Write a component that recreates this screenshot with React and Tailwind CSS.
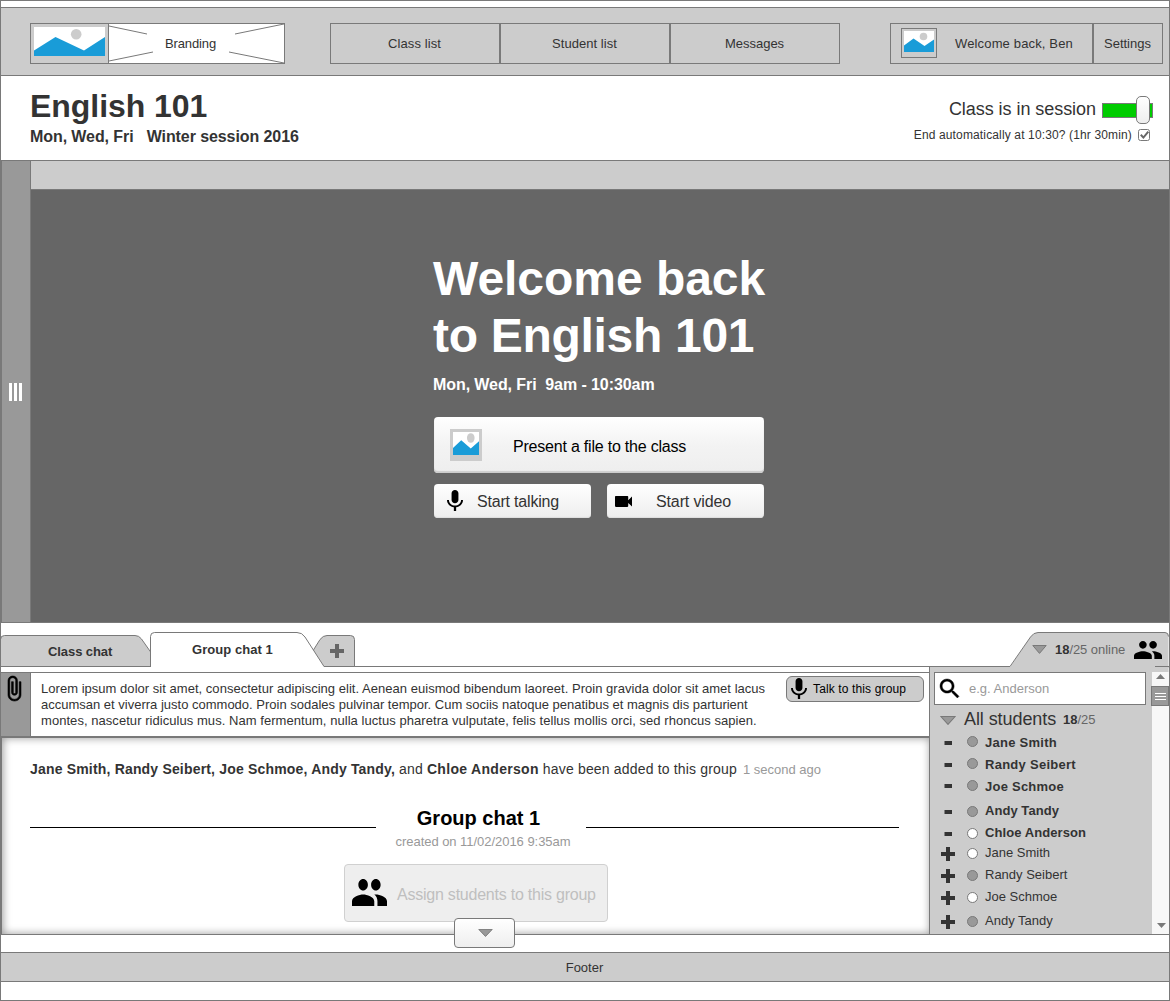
import React from "react";

function Picture({ className, sun = [42.5, 9.5, 5.3], size = [71, 29], hill }) {
  return (
    <svg className={className} viewBox={`0 0 ${size[0]} ${size[1]}`} preserveAspectRatio="none">
      <rect width={size[0]} height={size[1]} fill="#fff" />
      <circle cx={sun[0]} cy={sun[1]} r={sun[2]} fill="#ccc" />
      <path d={hill} fill="#199cd8" />
    </svg>
  );
}

const SMALL_HILL = "M0 14.5 9.5 7.5 20.5 15 30 8.5V21H0z";

function Icon({ className, viewBox, d }) {
  return (
    <svg className={className} viewBox={viewBox} preserveAspectRatio="none" fill="#000">
      <path d={d} />
    </svg>
  );
}

function People({ className }) {
  return (
    <Icon
      className={className}
      viewBox="1 5 22 14"
      d="M16 11c1.66 0 2.99-1.34 2.99-3S17.66 5 16 5c-1.66 0-3 1.34-3 3s1.34 3 3 3zm-8 0c1.66 0 2.99-1.34 2.99-3S9.66 5 8 5C6.34 5 5 6.34 5 8s1.34 3 3 3zm0 2c-2.33 0-7 1.17-7 3.5V19h14v-2.5c0-2.33-4.67-3.5-7-3.5zm8 0c-.29 0-.62.02-.97.05 1.16.84 1.97 1.97 1.97 3.45V19h6v-2.5c0-2.33-4.67-3.5-7-3.5z"
    />
  );
}

function Mic({ className }) {
  return (
    <Icon
      className={className}
      viewBox="5 2 14 19"
      d="M12 14c1.66 0 2.99-1.34 2.99-3L15 5c0-1.66-1.34-3-3-3S9 3.34 9 5v6c0 1.66 1.34 3 3 3zm5.3-3c0 3-2.54 5.1-5.3 5.1S6.7 14 6.7 11H5c0 3.41 2.72 6.23 6 6.72V21h2v-3.28c3.28-.48 6-3.3 6-6.72h-1.7z"
    />
  );
}

function Triangle({ className }) {
  return (
    <svg className={className} viewBox="0 0 15 9" preserveAspectRatio="none">
      <path d="M.8.5h13.4L7.5 8.4z" fill="#999" stroke="#797979" />
    </svg>
  );
}

function Header() {
  return (
    <header className="flex h-[69px] border-y border-[#797979] bg-[#ccc] pt-[15px] pl-[29px]">
      <div className="flex h-[41px] w-[255px] border border-[#797979]">
        <div className="w-[77px] pt-[3px] pl-[3px]">
          <Picture className="block h-[29px] w-[71px]" hill="M0 23.5 21.5 10 50 23.5 71 10V29H0z" sun={[42.2, 7.2, 5.3]} />
        </div>
        <div className="relative flex h-[39px] w-[176px] items-center justify-center border-l border-[#797979] bg-white">
          <svg className="absolute inset-0 h-full w-full" viewBox="0 0 175 39" fill="none" stroke="#797979">
            <path d="M0 2 38 10M175 0 126 10M0 37 44 28M175 39 120 28" />
          </svg>
          <span className="relative -left-[6px] tracking-[-0.1px]">Branding</span>
        </div>
      </div>
      <nav className="ml-[45px] flex h-[41px]">
        <a className="flex w-[170px] items-center justify-center border border-[#797979] pr-px tracking-[0.12px]">Class list</a>
        <a className="flex w-[170px] items-center justify-center border border-[#797979] pr-px tracking-[0.05px]">Student list</a>
        <a className="flex w-[170px] items-center justify-center border border-[#797979] pr-px">Messages</a>
      </nav>
      <div className="ml-[50px] flex h-[41px]">
        <div className="flex w-[203px] items-start border border-[#797979] pt-1 pl-[10px]">
          <div className="h-[30px] w-9 border border-[#797979] p-[2px]">
            <Picture className="block h-[21px] w-[30px]" size={[30, 21]} sun={[19.5, 5.5, 3.8]} hill={SMALL_HILL} />
          </div>
          <span className="mt-2 ml-[18px] tracking-[0.15px]">Welcome back, Ben</span>
        </div>
        <div className="flex w-[70px] items-center justify-center border border-[#797979] pr-px">Settings</div>
      </div>
    </header>
  );
}

function TitleBar() {
  return (
    <section className="flex h-[84px] justify-between pl-[29px]">
      <div className="font-bold">
        <h1 className="mt-[12px] text-[32px] leading-9 tracking-[-0.05px]">English 101</h1>
        <p className="mt-1 text-base leading-[18px] tracking-[-0.08px] whitespace-pre">Mon, Wed, Fri   Winter session 2016</p>
      </div>
      <div className="flex flex-col items-end pr-4">
        <div className="flex pt-5">
          <span className="mt-[3px] text-[18px] leading-5 tracking-[-0.05px]">Class is in session</span>
          <div className="relative mt-[7px] ml-[6px] h-[15px] w-[51px] border border-[#797979] bg-[#0c0]">
            <div className="absolute -top-2 left-[33px] h-7 w-[14px] rounded-[5px] border border-[#797979] bg-linear-to-b from-white to-[#eee]" />
          </div>
        </div>
        <label className="mt-[9px] flex pr-[3px] text-xs leading-[14px] tracking-[0.14px]">
          End automatically at 10:30? (1hr 30min)
          <svg className="mt-px ml-[6px] h-3 w-3" viewBox="0 0 12 12" fill="none">
            <rect x=".5" y=".5" width="11" height="11" rx="2" fill="#fff" stroke="#797979" />
            <path d="M2.8 5.8 5.4 8.600 10.300 2.600" stroke="#666" strokeWidth="2" />
          </svg>
        </label>
      </div>
    </section>
  );
}

function Stage() {
  return (
    <section className="flex h-[463px] border-y border-[#797979]">
      <div className="flex w-[30px] items-center border-x border-[#797979] bg-[#999]">
        <div className="ml-[7px] flex gap-[2px]">
          <i className="h-[18px] w-[3px] bg-white" />
          <i className="h-[18px] w-[3px] bg-white" />
          <i className="h-[18px] w-[3px] bg-white" />
        </div>
      </div>
      <div className="flex-1 bg-[#666]">
        <div className="h-[29px] border-b border-[#797979] bg-[#ccc]" />
        <div className="ml-[402px] w-[340px] pt-[60px] font-bold text-white">
          <h2 className="text-[48px] leading-[57px]">
            <span className="block tracking-[-0.04px]">Welcome back</span>
            <span className="block tracking-[-0.3px]">to English 101</span>
          </h2>
          <p className="mt-[12px] text-base leading-[18px] tracking-[-0.08px] whitespace-pre">Mon, Wed, Fri  9am - 10:30am</p>
        </div>
        <div className="mt-[23px] ml-[403px] w-[330px] text-base">
          <button className="flex h-14 w-full items-center rounded-[4px] bg-linear-to-b from-white via-[#f3f3f3] to-[#eee] shadow-[inset_0_-2px_1px_#ccc] text-black">
            <span className="ml-4 block h-8 w-8 bg-[#ccc] p-[3px]">
              <Picture className="block h-[23px] w-[26px]" size={[30, 21]} sun={[20.5, 5.5, 4.4]} hill={SMALL_HILL} />
            </span>
            <span className="mt-1 ml-[31px] tracking-[-0.21px]">Present a file to the class</span>
          </button>
          <div className="mt-[11px] flex justify-between">
            <button className="flex h-[34px] w-[157px] items-center rounded-[4px] bg-linear-to-b from-white to-[#eee] shadow-[inset_0_-1px_1px_#ddd]">
              <Mic className="mb-[1px] ml-[13px] h-[21px] w-4" />
              <span className="mt-[2px] ml-[14px] tracking-[-0.19px]">Start talking</span>
            </button>
            <button className="flex h-[34px] w-[157px] items-center rounded-[4px] bg-linear-to-b from-white to-[#eee] shadow-[inset_0_-1px_1px_#ddd]">
              <Icon
                className="ml-2 h-[11px] w-[17px]"
                viewBox="3 6 18 12"
                d="M17 10.5V7c0-.55-.45-1-1-1H4c-.55 0-1 .45-1 1v10c0 .55.45 1 1 1h12c.55 0 1-.45 1-1v-3.5l4 4v-11l-4 4z"
              />
              <span className="mt-[2px] ml-6 tracking-[-0.13px]">Start video</span>
            </button>
          </div>
        </div>
      </div>
    </section>
  );
}

function Tabs() {
  return (
    <div className="relative z-10 -ml-px flex h-[44px] w-[1169px]">
      <div className="relative h-[44px] w-[150px] font-bold">
        <svg className="absolute top-0 left-0 h-[44px] w-[151px]" viewBox="0 0 151 44">
          <path d="M.5 43.5V16.500q0-4 4-4H135q4 0 6.500 3.500L151 29.500V43.500z" fill="#ccc" stroke="#797979" />
        </svg>
        <span className="relative top-[21px] left-[48px] tracking-[-0.08px]">Class chat</span>
      </div>
      <div className="relative h-[44px] w-[174px] font-bold">
        <svg className="absolute top-0 left-0 z-10 h-[44px] w-[175px]" viewBox="0 0 175 44">
          <path d="M.5 44V13.500q0-4 4-4H147q5 0 8 4.500L174 43.500V44z" fill="#fff" />
          <path d="M.5 44V13.500q0-4 4-4H147q5 0 8 4.500L174 43.500" fill="none" stroke="#797979" />
        </svg>
        <span className="relative top-[19px] left-[42px] z-10 tracking-[0.06px]">Group chat 1</span>
      </div>
      <div className="relative h-[44px] flex-1 border-b border-[#797979]">
        <svg className="absolute top-0 -left-3 h-[44px] w-[43px]" viewBox="0 0 43 44">
          <path d="M.5 28.500 8 16.500Q11 12.500 15 12.500H38.500q4 0 4 4V43.500H10z" fill="#ccc" stroke="#797979" />
          <path d="M18 28H32M25 21V35" stroke="#666" strokeWidth="4" />
        </svg>
      </div>
      <div className="relative flex h-[44px] w-[159px]">
        <svg className="absolute top-0 left-0 h-[50px] w-[160px]" viewBox="0 0 160 50">
          <path d="M0 44 20.500 14Q23.500 9.500 28 9.500H155q3.500 0 3.500 4V49H0z" fill="#ccc" />
          <path d="M0 43.500 20.500 14Q23.500 9.500 28 9.500H155q3.500 0 3.500 4M145 43.500H159" fill="none" stroke="#797979" />
        </svg>
        <Triangle className="relative mt-[22px] ml-[22px] h-[9px] w-[15px]" />
        <span className="relative mt-[19px] ml-2 tracking-[-0.05px] text-[#666]">
          <b className="text-[#333]">18</b>/25 online
        </span>
        <People className="relative mt-[18px] ml-[9px] h-[18px] w-7 shrink-0" />
      </div>
    </div>
  );
}

function Notice() {
  return (
    <div className="mt-[5px] flex h-[66px] w-[928px] border-y border-t-[#797979] border-b-2 border-b-[#797979]">
      <div className="w-[30px] border-r border-[#797979] bg-[#999] pt-[3px] pl-[7px]">
        <svg className="block h-[25px] w-[13px] overflow-visible" viewBox="7 1 11 22" preserveAspectRatio="none" stroke="#000" strokeWidth=".5">
          <path d="M16.5 6v11.500c0 2.210-1.790 4-4 4s-4-1.790-4-4V5c0-1.380 1.120-2.500 2.500-2.500s2.500 1.120 2.500 2.500v10.500c0 .55-.45 1-1 1s-1-.45-1-1V6H10v9.500c0 1.380 1.120 2.500 2.500 2.500s2.500-1.120 2.500-2.500V5c0-2.210-1.790-4-4-4S7 2.790 7 5v12.500c0 3.040 2.460 5.500 5.500 5.500s5.500-2.460 5.500-5.500V6h-1.500z" />
        </svg>
      </div>
      <p className="mt-2 ml-[10px] w-[745px] whitespace-nowrap">
        <span className="block tracking-[0.03px]">
          Lorem ipsum dolor sit amet, consectetur adipiscing elit. Aenean euismod bibendum laoreet. Proin gravida dolor sit amet lacus
        </span>
        <span className="block">
          accumsan et viverra justo commodo. Proin sodales pulvinar tempor. Cum sociis natoque penatibus et magnis dis parturient
        </span>
        <span className="block tracking-[0.05px]">
          montes, nascetur ridiculus mus. Nam fermentum, nulla luctus pharetra vulputate, felis tellus mollis orci, sed rhoncus sapien.
        </span>
      </p>
      <button className="mt-[3px] flex h-[26px] w-[138px] items-center rounded-md border border-[#797979] bg-[#ccc] text-xs text-black">
        <Mic className="mb-px ml-1 h-[21px] w-4" />
        <span className="ml-[6px] tracking-[0.13px]">Talk to this group</span>
      </button>
    </div>
  );
}

function Chat() {
  return (
    <div className="flex h-[196px] w-[928px] flex-col border-l border-[#797979] pl-[28px] shadow-[inset_1px_0_9px_rgba(0,0,0,0.4)]">
      <p className="mt-[23px] flex text-sm leading-4 whitespace-pre">
        <b className="tracking-[0.18px]">Jane Smith, Randy Seibert, Joe Schmoe, Andy Tandy,</b>
        <span className="tracking-[0.15px]"> and </span>
        <b className="tracking-[0.3px]">Chloe Anderson</b>
        <span className="tracking-[0.17px]"> have been added to this group</span>
        <span className="mt-px ml-[6px] text-[13px] text-[#999]">1 second ago</span>
      </p>
      <div className="mt-[27px] flex">
        <hr className="mt-[22px] w-[346px] border-black" />
        <div className="w-[210px] text-center">
          <h3 className="mt-px pr-[5px] text-[20px] leading-6 font-bold text-black">Group chat 1</h3>
          <p className="mt-[4px] ml-1 tracking-[-0.04px] text-[#999]">created on 11/02/2016 9:35am</p>
        </div>
        <hr className="mt-[22px] w-[313px] border-black" />
      </div>
      <button className="mt-[14px] ml-[314px] flex h-[58px] w-[264px] shrink-0 items-center rounded-[4px] border border-[#d0d0d0] bg-[#eee] text-base text-[#bfbfbf]">
        <People className="mb-px ml-[7px] h-[27px] w-[35px]" />
        <span className="mt-[3px] ml-[10px] tracking-[-0.23px]">Assign students to this group</span>
      </button>
    </div>
  );
}

const STUDENTS = [
  { name: "Jane Smith", row: "h-[22px] tracking-[0.26px]", mark: "mt-[2px]", dot: "mt-px", member: true, online: true },
  { name: "Randy Seibert", row: "h-[22px] tracking-[0.27px]", mark: "mt-[2px]", dot: "mt-px", member: true, online: true },
  { name: "Joe Schmoe", row: "h-[24px] tracking-[0.24px]", mark: "mt-px", dot: "mt-px", member: true, online: true },
  { name: "Andy Tandy", row: "h-[22px] tracking-[0.05px]", mark: "mt-[3px]", dot: "mt-[3px]", member: true, online: true },
  { name: "Chloe Anderson", row: "h-[20px] tracking-[0.08px]", mark: "mt-[3px]", dot: "mt-[3px]", member: true, online: false },
  { name: "Jane Smith", row: "h-[22px]", mark: "mt-px", dot: "mt-[3px]", member: false, online: false },
  { name: "Randy Seibert", row: "h-[22px]", mark: "mt-px", dot: "mt-[3px]", member: false, online: true },
  { name: "Joe Schmoe", row: "h-[24px]", mark: "mt-px", dot: "mt-[3px]", member: false, online: false },
  { name: "Andy Tandy", row: "h-[20px]", mark: "mt-px", dot: "mt-[3px]", member: false, online: true },
];

function Student({ name, row, mark, dot, member, online }) {
  return (
    <li className={`flex ${row}`}>
      <svg className={`h-[14px] w-[14px] overflow-visible ${mark}`} viewBox="0 0 14 14" stroke="#333">
        {member ? <path d="M3.500 6H11" strokeWidth="4" /> : <path d="M0 8H14M7 1V15" strokeWidth="4" />}
      </svg>
      <i
        className={`ml-3 h-[11px] w-[11px] rounded-full border border-[#797979] ${dot} ${online ? "bg-[#999]" : "bg-white"}`}
      />
      <span className={`ml-[7px] whitespace-nowrap ${member ? "font-bold" : ""}`}>{name}</span>
    </li>
  );
}

function Sidebar() {
  return (
    <aside className="flex w-[240px] border-l border-[#797979] bg-[#ccc]">
      <div className="w-[222px] pl-1">
        <div className="mt-[5px] flex h-[33px] w-[212px] border border-[#797979] bg-white pt-[6px] pl-[5px]">
          <Icon
            className="h-[19px] w-[19px] overflow-visible stroke-black stroke-[0.4]"
            viewBox="3 3 17.500 17.500"
            d="M15.500 14h-.79l-.28-.27C15.410 12.590 16 11.110 16 9.500 16 5.910 13.090 3 9.500 3S3 5.910 3 9.500 5.910 16 9.500 16c1.610 0 3.090-.59 4.230-1.570l.27.28v.79l5 4.990L20.490 19l-4.990-5zm-6 0C7.010 14 5 11.990 5 9.500S7.010 5 9.500 5 14 7.010 14 9.500 11.990 14 9.500 14z"
          />
          <span className="mt-[2px] ml-[10px] text-[#999]">e.g. Anderson</span>
        </div>
        <div className="mt-1 ml-[6px] flex h-[26px]">
          <Triangle className="mt-[7px] h-[9px] w-4" />
          <span className="ml-2 text-[18px] leading-5 tracking-[-0.08px]">All students</span>
          <span className="mt-[3px] ml-[7px] tracking-[-0.05px] text-[#666]">
            <b className="text-[#333]">18</b>/25
          </span>
        </div>
        <ul className="ml-[7px]">
          {STUDENTS.map((s, i) => (
            <Student key={i} {...s} />
          ))}
        </ul>
      </div>
      <div className="mt-px flex flex-1 flex-col items-center bg-[#f7f7f7]">
        <svg className="mt-[6px] h-[5px] w-[9px]" viewBox="0 0 9 5">
          <path d="M0 5 4.500 0 9 5z" fill="#797979" />
        </svg>
        <div className="mt-[7px] -ml-px flex h-5 w-[18px] shrink-0 flex-col items-center gap-[2px] border border-[#797979] bg-[#999] pt-[6px]">
          <i className="h-px w-[11px] bg-white" />
          <i className="h-px w-[11px] bg-white" />
          <i className="h-px w-[11px] bg-white" />
        </div>
        <svg className="mt-auto mb-[6px] ml-[2px] h-[5px] w-[9px]" viewBox="0 0 9 5">
          <path d="M0 0 4.500 5 9 0z" fill="#797979" />
        </svg>
      </div>
    </aside>
  );
}

export default function App() {
  return (
    <div className="h-[1001px] w-[1170px] overflow-hidden border border-[#797979] bg-white pt-[6px] font-['Liberation_Sans',Arial,sans-serif] text-[13px] leading-4 text-[#333]">
      <Header />
      <TitleBar />
      <Stage />
      <Tabs />
      <main className="relative flex h-[268px] border-b border-[#797979]">
        <div className="w-[928px] shrink-0">
          <Notice />
          <Chat />
        </div>
        <Sidebar />
        <button className="absolute top-[251px] left-[453px] z-10 flex h-[30px] w-[61px] items-center justify-center rounded-[4px] border border-[#797979] bg-linear-to-b from-white to-[#eee]">
          <Triangle className="ml-[2px] h-2 w-[15px]" />
        </button>
      </main>
      <footer className="mt-[17px] flex h-[30px] items-center justify-center border-y border-[#797979] bg-[#ccc] pt-px pr-px">Footer</footer>
    </div>
  );
}
